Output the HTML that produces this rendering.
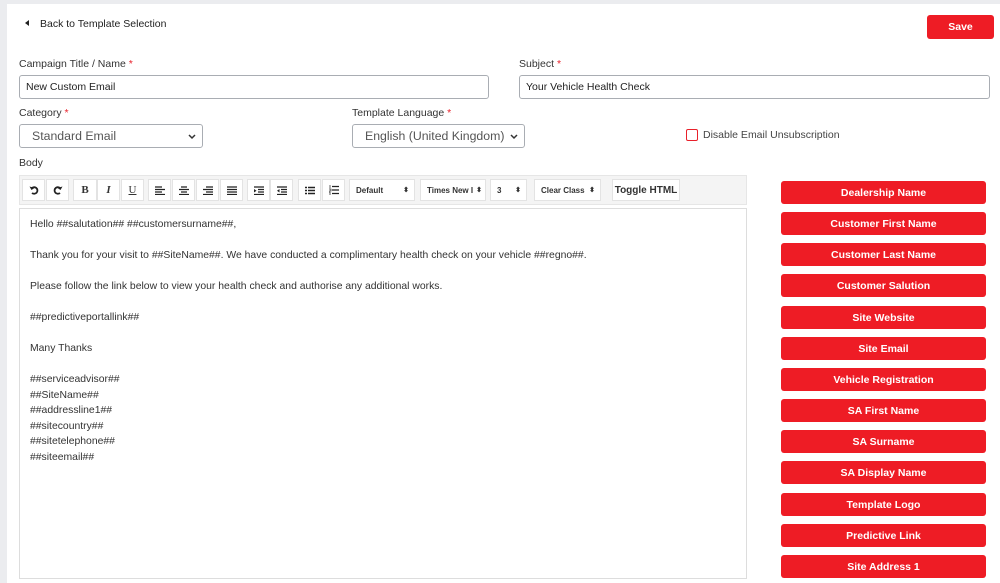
<!DOCTYPE html>
<html><head><meta charset="utf-8"><style>
*{box-sizing:border-box;margin:0;padding:0}
body{width:1000px;height:583px;background:#ebecef;font-family:"Liberation Sans",Arial,sans-serif;color:#333;position:relative;overflow:hidden}
.card{position:absolute;left:7px;top:4px;right:0;bottom:0;background:#fff}
.a{position:absolute}
.lbl{font-size:10.5px;color:#333}
.req{color:#e8202a}
.inp{position:absolute;border:1px solid #a9adb3;border-radius:3px;background:#fff;font-size:10.5px;padding-left:6px;display:flex;align-items:center;color:#222}
.sel{position:absolute;border:1px solid #a9adb3;border-radius:3px;background:#fff;font-size:12.3px;padding-left:12px;display:flex;align-items:center;color:#555}
.sel svg{position:absolute;right:6px;top:9px}
.tb{position:absolute;left:19px;top:175px;width:728px;height:30px;background:#f4f4f4;border:1px solid #e6e6e6}
.b{position:absolute;top:3px;height:22px;background:#fff;border:1px solid #e3e3e3;display:flex;align-items:center;justify-content:center;font-size:8px;font-weight:bold;color:#333}
.ed{position:absolute;left:19px;top:208px;width:728px;height:371px;border:1px solid #ddd;background:#fff;font-size:10.4px;color:#333;padding:8px 0 0 10px;line-height:15.5px}
.ed p{margin-bottom:15.5px}
.rb{position:absolute;left:781px;width:205px;height:23px;background:#ee1c25;border-radius:3px;color:#fff;font-size:10.5px;font-weight:bold;display:flex;align-items:center;justify-content:center}
</style></head><body>
<div class="card"></div>
<div class="a" style="left:25px;top:20px;width:0;height:0;border-top:3.5px solid transparent;border-bottom:3.5px solid transparent;border-right:4px solid #222"></div>
<div class="a lbl" style="left:40px;top:18px;color:#222">Back to Template Selection</div>
<div class="a" style="left:927px;top:15px;width:67px;height:24px;background:#ee1c25;border-radius:3px;color:#fff;font-size:10.5px;font-weight:bold;display:flex;align-items:center;justify-content:center">Save</div>

<div class="a lbl" style="left:19px;top:58px">Campaign Title / Name <span class="req">*</span></div>
<div class="inp" style="left:19px;top:75px;width:470px;height:24px">New Custom Email</div>
<div class="a lbl" style="left:519px;top:58px">Subject <span class="req">*</span></div>
<div class="inp" style="left:519px;top:75px;width:471px;height:24px">Your Vehicle Health Check</div>

<div class="a lbl" style="left:19px;top:107px">Category <span class="req">*</span></div>
<div class="sel" style="left:19px;top:124px;width:184px;height:24px">Standard Email<svg width="8" height="6" viewBox="0 0 8 6"><path d="M1 1l3 3 3-3" stroke="#333" stroke-width="1.5" fill="none"/></svg></div>
<div class="a lbl" style="left:352px;top:107px">Template Language <span class="req">*</span></div>
<div class="sel" style="left:352px;top:124px;width:173px;height:24px">English (United Kingdom)<svg width="8" height="6" viewBox="0 0 8 6"><path d="M1 1l3 3 3-3" stroke="#333" stroke-width="1.5" fill="none"/></svg></div>
<div class="a" style="left:686px;top:129px;width:12px;height:12px;border:1.5px solid #e8202a;border-radius:2px"></div>
<div class="a lbl" style="left:703px;top:129px;color:#444">Disable Email Unsubscription</div>

<div class="a lbl" style="left:19px;top:157px">Body</div>
<div class="tb">
<div class="b" style="left:2px;width:23px"><svg width="10" height="10" viewBox="0 0 10 10"><path d="M2.5 3.5A3.3 3.3 0 1 1 3 8" stroke="#222" stroke-width="1.8" fill="none"/><path d="M0.5 1.5l2 3.5 3-2z" fill="#222"/></svg></div>
<div class="b" style="left:26px;width:23px"><svg width="10" height="10" viewBox="0 0 10 10"><path d="M7.5 3.5A3.3 3.3 0 1 0 7 8" stroke="#222" stroke-width="1.8" fill="none"/><path d="M9.5 1.5l-2 3.5-3-2z" fill="#222"/></svg></div>
<div class="b" style="left:53px;width:24px;font-family:'Liberation Serif',serif;font-size:11px">B</div>
<div class="b" style="left:77px;width:23px;font-family:'Liberation Serif',serif;font-style:italic;font-size:11px">I</div>
<div class="b" style="left:101px;width:23px;font-family:'Liberation Serif',serif;text-decoration:underline;font-weight:normal;font-size:11px">U</div>
<div class="b" style="left:128px;width:23px"><svg width="10" height="9"><path d="M0 1h7M0 3.5h10M0 6h7M0 8.5h10" stroke="#222" stroke-width="1.2"/></svg></div>
<div class="b" style="left:152px;width:23px"><svg width="10" height="9"><path d="M2 1h6M0 3.5h10M2 6h6M0 8.5h10" stroke="#222" stroke-width="1.2"/></svg></div>
<div class="b" style="left:176px;width:23px"><svg width="10" height="9"><path d="M3 1h7M0 3.5h10M3 6h7M0 8.5h10" stroke="#222" stroke-width="1.2"/></svg></div>
<div class="b" style="left:200px;width:23px"><svg width="10" height="9"><path d="M0 1h10M0 3.5h10M0 6h10M0 8.5h10" stroke="#222" stroke-width="1.2"/></svg></div>
<div class="b" style="left:227px;width:23px"><svg width="10" height="9"><path d="M0 1h10M4 3.5h6M4 6h6M0 8.5h10" stroke="#222" stroke-width="1.2"/><path d="M0 3l2.5 1.7L0 6.5z" fill="#222"/></svg></div>
<div class="b" style="left:250px;width:23px"><svg width="10" height="9"><path d="M0 1h10M4 3.5h6M4 6h6M0 8.5h10" stroke="#222" stroke-width="1.2"/><path d="M2.5 3L0 4.7 2.5 6.5z" fill="#222"/></svg></div>
<div class="b" style="left:278px;width:23px"><svg width="10" height="9"><path d="M0 1.5h2M3 1.5h7M0 4.5h2M3 4.5h7M0 7.5h2M3 7.5h7" stroke="#222" stroke-width="1.4"/></svg></div>
<div class="b" style="left:302px;width:23px"><svg width="10" height="10"><path d="M3 1.5h7M3 5h7M3 8.5h7" stroke="#222" stroke-width="1.2"/><path d="M1 0v3M0 4h2v2H0v2h2M0 10h2" stroke="#222" stroke-width="0.7" fill="none"/></svg></div>
<div class="b" style="left:329px;width:66px;justify-content:flex-start;padding-left:6px">Default<span style="position:absolute;right:5px;font-size:7px">⬍</span></div>
<div class="b" style="left:400px;width:66px;justify-content:flex-start;padding-left:6px">Times New I<span style="position:absolute;right:3px;font-size:7px">⬍</span></div>
<div class="b" style="left:470px;width:37px;justify-content:flex-start;padding-left:6px">3<span style="position:absolute;right:5px;font-size:7px">⬍</span></div>
<div class="b" style="left:514px;width:67px;justify-content:flex-start;padding-left:6px">Clear Class<span style="position:absolute;right:5px;font-size:7px">⬍</span></div>
<div class="b" style="left:592px;width:68px;font-size:10px">Toggle HTML</div>
</div>
<div class="ed">
<p>Hello ##salutation## ##customersurname##,</p>
<p>Thank you for your visit to ##SiteName##. We have conducted a complimentary health check on your vehicle ##regno##.</p>
<p>Please follow the link below to view your health check and authorise any additional works.</p>
<p>##predictiveportallink##</p>
<p>Many Thanks</p>
<div>##serviceadvisor##<br>##SiteName##<br>##addressline1##<br>##sitecountry##<br>##sitetelephone##<br>##siteemail##</div>
</div>

<div class="rb" style="top:181px">Dealership Name</div>
<div class="rb" style="top:212px">Customer First Name</div>
<div class="rb" style="top:243px">Customer Last Name</div>
<div class="rb" style="top:274px">Customer Salution</div>
<div class="rb" style="top:306px">Site Website</div>
<div class="rb" style="top:337px">Site Email</div>
<div class="rb" style="top:368px">Vehicle Registration</div>
<div class="rb" style="top:399px">SA First Name</div>
<div class="rb" style="top:430px">SA Surname</div>
<div class="rb" style="top:461px">SA Display Name</div>
<div class="rb" style="top:493px">Template Logo</div>
<div class="rb" style="top:524px">Predictive Link</div>
<div class="rb" style="top:555px">Site Address 1</div>
</body></html>
